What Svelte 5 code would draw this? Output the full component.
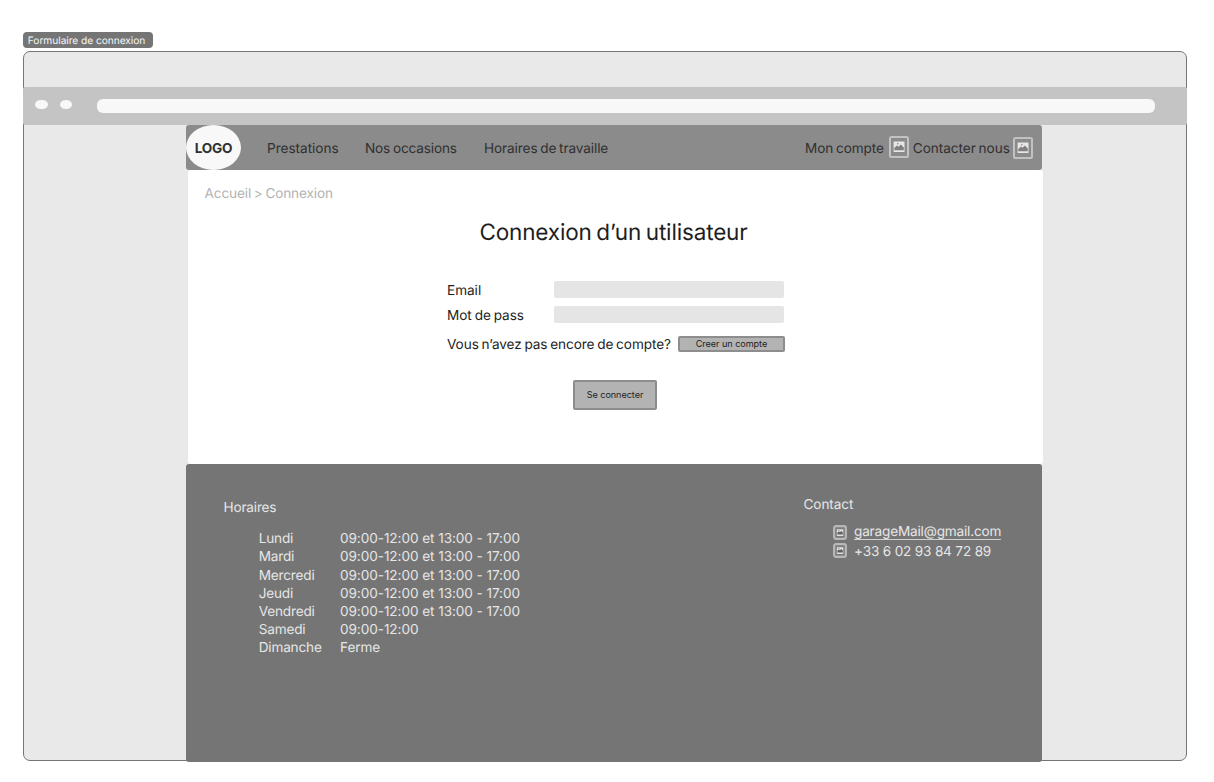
<script>
  const schedule = [
    ['Lundi', '09:00-12:00 et 13:00 - 17:00'],
    ['Mardi', '09:00-12:00 et 13:00 - 17:00'],
    ['Mercredi', '09:00-12:00 et 13:00 - 17:00'],
    ['Jeudi', '09:00-12:00 et 13:00 - 17:00'],
    ['Vendredi', '09:00-12:00 et 13:00 - 17:00'],
    ['Samedi', '09:00-12:00'],
    ['Dimanche', 'Ferme']
  ];
</script>

{#snippet picture(kind)}
  <svg class={kind} viewBox="0 0 20 22" preserveAspectRatio="none" aria-hidden="true">
    <rect x="1" y="1" width="18" height="20" rx="1.6" fill="none" stroke="#c2c2c2" stroke-width="2" />
    <path d="M4.6 5.5H15.5V16H4.6Z" fill="#e6e6e6" />
    <path d="M5.3 14.3V12L8 9.4L9.6 10.8L11.9 8.6L14.8 11.6V14.3Z" fill="#808080" />
    <circle cx="8.8" cy="7.8" r="0.8" fill="#808080" />
  </svg>
{/snippet}

{#snippet smallPicture()}
  <svg class="small" viewBox="0 0 14 15" preserveAspectRatio="none" aria-hidden="true">
    <rect x="1.1" y="1.1" width="11.8" height="12.8" rx="1.8" fill="#7c7c7c" stroke="#b8b8b8" stroke-width="2.1" />
    <path d="M3.8 4.2H10.3V11H3.8Z" fill="#dedede" />
    <path d="M4.4 9.5V7.6L5.9 6.5L7 7.3L8.2 6.1L9.8 7.6V9.5Z" fill="#606060" />
    <rect x="5.4" y="4.9" width="1" height="1" fill="#808080" />
  </svg>
{/snippet}

<div class="canvas">
  <div class="tag">Formulaire de connexion</div>
  <div class="window">
    <div class="toolbar">
      <i class="dot"></i><i class="dot"></i>
      <div class="address"></div>
    </div>
    <div class="site">
      <header>
        <div class="logo">LOGO</div>
        <nav>
          <span class="n1">Prestations</span>
          <span class="n2">Nos occasions</span>
          <span class="n3">Horaires de travaille</span>
        </nav>
        <div class="account">
          <span>Mon compte</span>{@render picture('pic first')}
          <span class="reach">Contacter nous</span>{@render picture('pic second')}
        </div>
      </header>
      <main>
        <div class="crumbs">Accueil &gt; Connexion</div>
        <h1>Connexion d’un utilisateur</h1>
        <form>
          <div class="field"><span>Email</span><div class="input"></div></div>
          <div class="field"><span>Mot de pass</span><div class="input"></div></div>
          <div class="register">
            <span>Vous n’avez pas encore de compte?</span>
            <button class="create" type="button">Creer un compte</button>
          </div>
          <button class="login" type="button">Se connecter</button>
        </form>
      </main>
      <footer>
        <section class="hours">
          <h2>Horaires</h2>
          <div class="table">
            {#each schedule as [day, time]}
              <span>{day}</span><span class="time">{time}</span>
            {/each}
          </div>
        </section>
        <section class="contact">
          <h2>Contact</h2>
          <div class="line">{@render smallPicture()}<span class="mail">garageMail@gmail.com</span></div>
          <div class="line phone">{@render smallPicture()}<span>+33 6 02 93 84 72 89</span></div>
        </section>
      </footer>
    </div>
  </div>
</div>

<style>
  :global(body) { background: #fff; }
  .canvas, .canvas * { box-sizing: border-box; }
  .canvas {
    width: 1214px; height: 782px; overflow: hidden;
    padding: 32px 0 0 22.5px;
    font-family: Inter, sans-serif; font-size: 13.6px; line-height: 18px; letter-spacing: -0.18px;
    white-space: nowrap; color: #1e1e1e; text-rendering: geometricPrecision;
  }
  .tag {
    width: 130.5px; height: 16px; border-radius: 4px; background: #757575;
    color: #f5f5f5; font-size: 10.2px; line-height: 18px; padding-left: 5.3px; letter-spacing: -0.05px;
  }
  .window {
    width: 1164.5px; height: 709.5px; margin-top: 3.4px; padding-top: 35px;
    border: 1.3px solid #757575; border-radius: 7px; background: #e9e9e9;
  }
  .toolbar {
    display: flex; align-items: center; height: 37.5px; margin: 0 -1px;
    padding-left: 12.5px; background: #c4c4c4; border-radius: 2px;
  }
  .dot { width: 12.5px; height: 9.5px; border-radius: 50%; background: #f8f8f8; margin: 0 12.2px 3.4px 0; }
  .address { width: 1058px; height: 14px; margin: 0.5px 0 0 12.5px; border-radius: 6px; background: #f8f8f8; }
  .site { width: 857px; margin-left: 162.5px; }
  header {
    display: flex; align-items: center; width: 855.5px; height: 45px;
    background: #8b8b8b; border-radius: 3px; color: #303030; word-spacing: -0.95px; font-weight: 430;
  }
  .logo {
    width: 55px; height: 45px; border-radius: 50%; background: #f8f8f8; flex: none;
    display: flex; align-items: center; justify-content: center; font-weight: 700; padding-top: 3px;
  }
  nav { display: flex; margin-left: 26px; padding-top: 3px; }
  .n1 { width: 98px; letter-spacing: -0.03px; }
  .n2 { width: 119px; letter-spacing: -0.14px; }
  .n3 { letter-spacing: -0.1px; }
  .account { display: flex; align-items: center; margin-left: auto; padding-right: 9px; }
  .account span { padding-top: 3px; letter-spacing: -0.1px; }
  .account .reach { width: 96.7px; letter-spacing: -0.05px; }
  .pic { width: 20px; height: 22px; flex: none; }
  .first { margin: 0 4px 0 5px; }
  .second { margin: 2px 0 0 3px; }
  main {
    height: 294.5px; margin-left: 1.5px; width: 855px; background: #fff;
    border-radius: 3px; padding-top: 15px; word-spacing: -0.95px; font-weight: 430;
  }
  .crumbs { color: #b3b3b3; padding-left: 17px; letter-spacing: -0.13px; }
  h1 {
    margin: 13px 0 0 292px; font-size: 22.5px; line-height: 34px; font-weight: 430;
    letter-spacing: -0.16px; word-spacing: -1.5px;
  }
  form { margin: 30.5px 0 0 259.5px; width: 338px; }
  .field { display: flex; align-items: center; height: 18px; margin-bottom: 7.2px; }
  .field span { width: 107px; padding-top: 3px; letter-spacing: -0.03px; }
  .input { width: 230px; height: 17.6px; border-radius: 2px; background: #e5e5e5; }
  .register { display: flex; justify-content: space-between; align-items: center; margin-top: 10px; height: 20px; }
  .register span { padding-top: 2px; letter-spacing: -0.08px; }
  button {
    padding: 0; color: #1e1e1e; background: #b3b3b3; border: 2px solid #8d8d8d;
    border-radius: 2px; font-family: inherit; font-size: 9.1px; letter-spacing: -0.05px;
  }
  .create { width: 107px; height: 16px; line-height: 12px; flex: none; }
  .login { display: block; width: 84px; height: 30px; margin: 26px 0 0 126px; }
  footer {
    display: flex; width: 855.5px; height: 297.5px; background: #757575;
    border-radius: 3px; color: #e6e6e6;
  }
  h2 { margin: 0; font-size: 13.6px; line-height: 18px; font-weight: 400; }
  .hours { width: 580px; padding: 34.5px 0 0 37.5px; }
  .table {
    display: grid; grid-template-columns: 81.3px 1fr; line-height: 18.2px;
    margin: 13.3px 0 0 35.2px;
  }
  .time { letter-spacing: -0.07px; }
  .contact { width: 230px; margin-left: 37.5px; padding-top: 32px; }
  .contact h2 { letter-spacing: -0.1px; }
  .line { display: flex; align-items: center; height: 20px; margin: 7.5px 0 0 29.5px; }
  .small { width: 14px; height: 15px; margin-right: 7px; }
  .line:not(.phone) .small { margin-top: 2px; }
  .mail { border-bottom: 1px solid #d0d0d0; height: 16px; line-height: 17px; }
  .phone { margin-top: -1px; }
  .phone span { padding-top: 1.5px; }
</style>
